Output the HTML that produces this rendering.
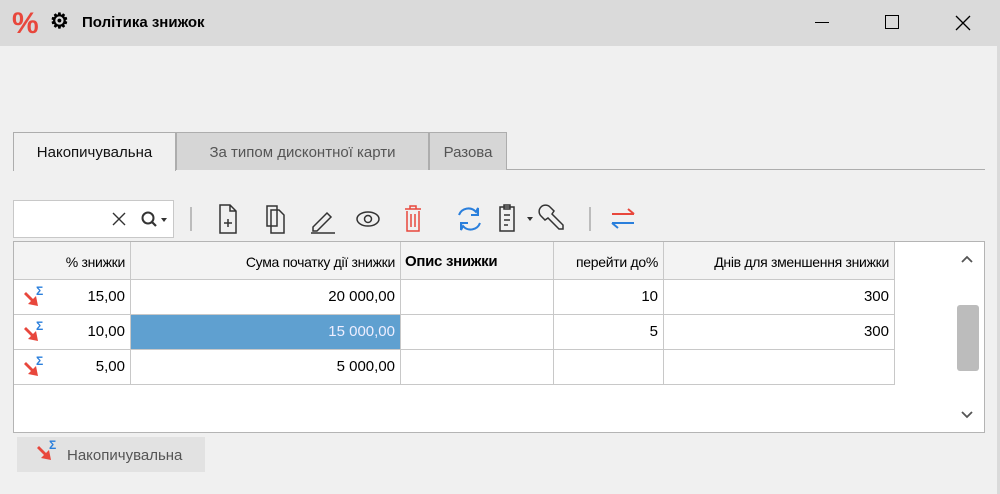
<!DOCTYPE html>
<html><head><meta charset="utf-8"><style>
*{box-sizing:border-box;margin:0;padding:0}
body{width:1000px;height:494px;background:#f0f0f0;font-family:"Liberation Sans","Noto Sans CJK SC",sans-serif;position:relative;overflow:hidden;font-size:14px;color:#000}
.abs{position:absolute}
.title{left:0;top:0;width:1000px;height:46px;background:#dadada}
.tab{top:132px;height:38px;border:1px solid #adadad;border-bottom:none;background:#d6d6d6;color:#555;font-size:15px;line-height:40px;text-align:center}
.grid{left:13px;top:241px;width:972px;height:192px;background:#fff;border:1px solid #b4b4b4}
.cell{position:absolute;border-right:1px solid #c8c8c8;border-bottom:1px solid #c8c8c8;text-align:right;padding-right:5px;font-size:15px;line-height:34px}
.hd{background:#f3f3f3;font-size:14px;letter-spacing:-0.3px}
</style></head><body>
<div class="abs title"></div>
<div class="abs" style="left:12px;top:6px;font-size:30px;color:#e8473c;font-weight:bold;line-height:36px">%</div>
<div class="abs" style="left:50px;top:10px;font-size:21px;line-height:24px;font-weight:bold">⚙</div>
<div class="abs" style="left:82px;top:14px;font-weight:bold;font-size:15px">Політика знижок</div>
<div class="abs" style="left:815px;top:22px;width:14px;height:1px;background:#000"></div>
<div class="abs" style="left:885px;top:15px;width:14px;height:14px;border:1.5px solid #000"></div>
<svg class="abs" style="left:955px;top:15px" width="16" height="16"><path d="M1 1L15 15M15 1L1 15" stroke="#000" stroke-width="1.3"/></svg>
<div class="abs" style="left:997px;top:46px;width:3px;height:448px;background:#dadada"></div>

<div class="abs" style="left:13px;top:169px;width:972px;height:1px;background:#adadad"></div>
<div class="abs tab" style="left:13px;width:163px;background:#f0f0f0;color:#111;height:39px">Накопичувальна</div>
<div class="abs tab" style="left:176px;width:253px">За типом дисконтної карти</div>
<div class="abs tab" style="left:429px;width:78px">Разова</div>

<div class="abs" style="left:13px;top:200px;width:161px;height:38px;background:#fff;border:1px solid #c8c8c8"></div>
<svg class="abs" style="left:0;top:195px" width="660" height="44" fill="none" stroke="#333" stroke-width="1.5">
<path d="M113 18l12 12M125 18l-12 12" stroke-width="1.4"/>
<circle cx="148" cy="23" r="5.5" stroke-width="2"/><path d="M152 27l4 4" stroke-width="2.2"/>
<path fill="#333" stroke="none" d="M161 23h6l-3 4z"/>
<path d="M191 12v24" stroke="#aaa"/>
<path d="M220 10h10l6 6v22H220z M230 10v6h6 M224 28h8 M228 24v8"/>
<path d="M267 11h10v20H267z M271 15h8l5 5v18H271z"/>
<path d="M313 32l14-14 4 4-14 14h-4z M311 38h24"/>
<ellipse cx="368" cy="24" rx="11" ry="7"/><circle cx="368" cy="24" r="3.5"/>
<path stroke="#e8473c" d="M405 14h16 M410 14v-3h6v3 M407 16v20h12V16 M411 19v13 M415 19v13"/>
<path stroke="#2a7fdc" stroke-width="2" d="M459 20a10 10 0 0 1 17-3l2-4v7h-7 M480 28a10 10 0 0 1-17 3l-2 4v-7h7"/>
<path d="M500 12h14v24h-14z M504 10h6v4h-6z M504 20h6 M504 25h6 M504 30h4"/>
<path fill="#333" stroke="none" d="M527 22h6l-3 4z"/>
<path d="M550 12l4 4-2 3 11 11v4h-4l-11-11-3 2-4-4a6 6 0 0 1 9-9z"/>
<path stroke="#aaa" d="M590 12v24"/>
<path stroke="#e8473c" stroke-width="2" d="M612 19h22 M628 14l6 5"/>
<path stroke="#2a7fdc" stroke-width="2" d="M612 28h22 M618 33l-6-5"/>
</svg>

<div class="abs grid">
<div class="cell hd" style="left:0;top:0;width:117px;height:38px;line-height:40px">% знижки</div>
<div class="cell hd" style="left:117px;top:0;width:270px;height:38px;line-height:40px">Сума початку дії знижки</div>
<div class="cell hd" style="left:387px;top:0;width:153px;height:38px;line-height:40px;text-align:left;padding-left:4px;font-weight:bold;font-size:15px">Опис знижки</div>
<div class="cell hd" style="left:540px;top:0;width:110px;height:38px;line-height:40px">перейти до%</div>
<div class="cell hd" style="left:650px;top:0;width:231px;height:38px;line-height:40px">Днів для зменшення знижки</div>

<div class="cell" style="left:0;top:38px;width:117px;height:35px">15,00</div>
<div class="cell" style="left:117px;top:38px;width:270px;height:35px">20 000,00</div>
<div class="cell" style="left:387px;top:38px;width:153px;height:35px"></div>
<div class="cell" style="left:540px;top:38px;width:110px;height:35px">10</div>
<div class="cell" style="left:650px;top:38px;width:231px;height:35px">300</div>

<div class="cell" style="left:0;top:73px;width:117px;height:35px">10,00</div>
<div class="cell" style="left:117px;top:73px;width:270px;height:35px;background:#5fa0d0;color:#eef">15 000,00</div>
<div class="cell" style="left:387px;top:73px;width:153px;height:35px"></div>
<div class="cell" style="left:540px;top:73px;width:110px;height:35px">5</div>
<div class="cell" style="left:650px;top:73px;width:231px;height:35px">300</div>

<div class="cell" style="left:0;top:108px;width:117px;height:35px">5,00</div>
<div class="cell" style="left:117px;top:108px;width:270px;height:35px">5 000,00</div>
<div class="cell" style="left:387px;top:108px;width:153px;height:35px"></div>
<div class="cell" style="left:540px;top:108px;width:110px;height:35px"></div>
<div class="cell" style="left:650px;top:108px;width:231px;height:35px"></div>

<svg class="abs" style="left:9px;top:43px" width="30" height="110"><g id="ic"><path d="M2 8l10 10" stroke="#e8473c" stroke-width="2.8"/><path d="M15 21l-2-10-8 8z" fill="#e8473c"/><text x="13" y="10" font-size="12" font-weight="bold" fill="#2a7fdc" font-family="Liberation Sans">Σ</text></g>
<use href="#ic" y="35"/><use href="#ic" y="70"/></svg>

<svg class="abs" style="left:944px;top:8px" width="20" height="180" fill="none" stroke="#555" stroke-width="1.8"><path d="M4 12l5-5 5 5 M4 162l5 5 5-5"/></svg>
<div class="abs" style="left:943px;top:63px;width:22px;height:66px;background:#bcbcbc;border-radius:3px"></div>
</div>

<div class="abs" style="left:17px;top:437px;width:188px;height:35px;background:#e2e2e2"></div>
<svg class="abs" style="left:36px;top:439px" width="30" height="30"><path d="M2 8l10 10" stroke="#e8473c" stroke-width="2.8"/><path d="M15 21l-2-10-8 8z" fill="#e8473c"/><text x="13" y="10" font-size="12" font-weight="bold" fill="#2a7fdc" font-family="Liberation Sans">Σ</text></svg>
<div class="abs" style="left:67px;top:447px;font-size:15px;color:#555">Накопичувальна</div>
</body></html>
